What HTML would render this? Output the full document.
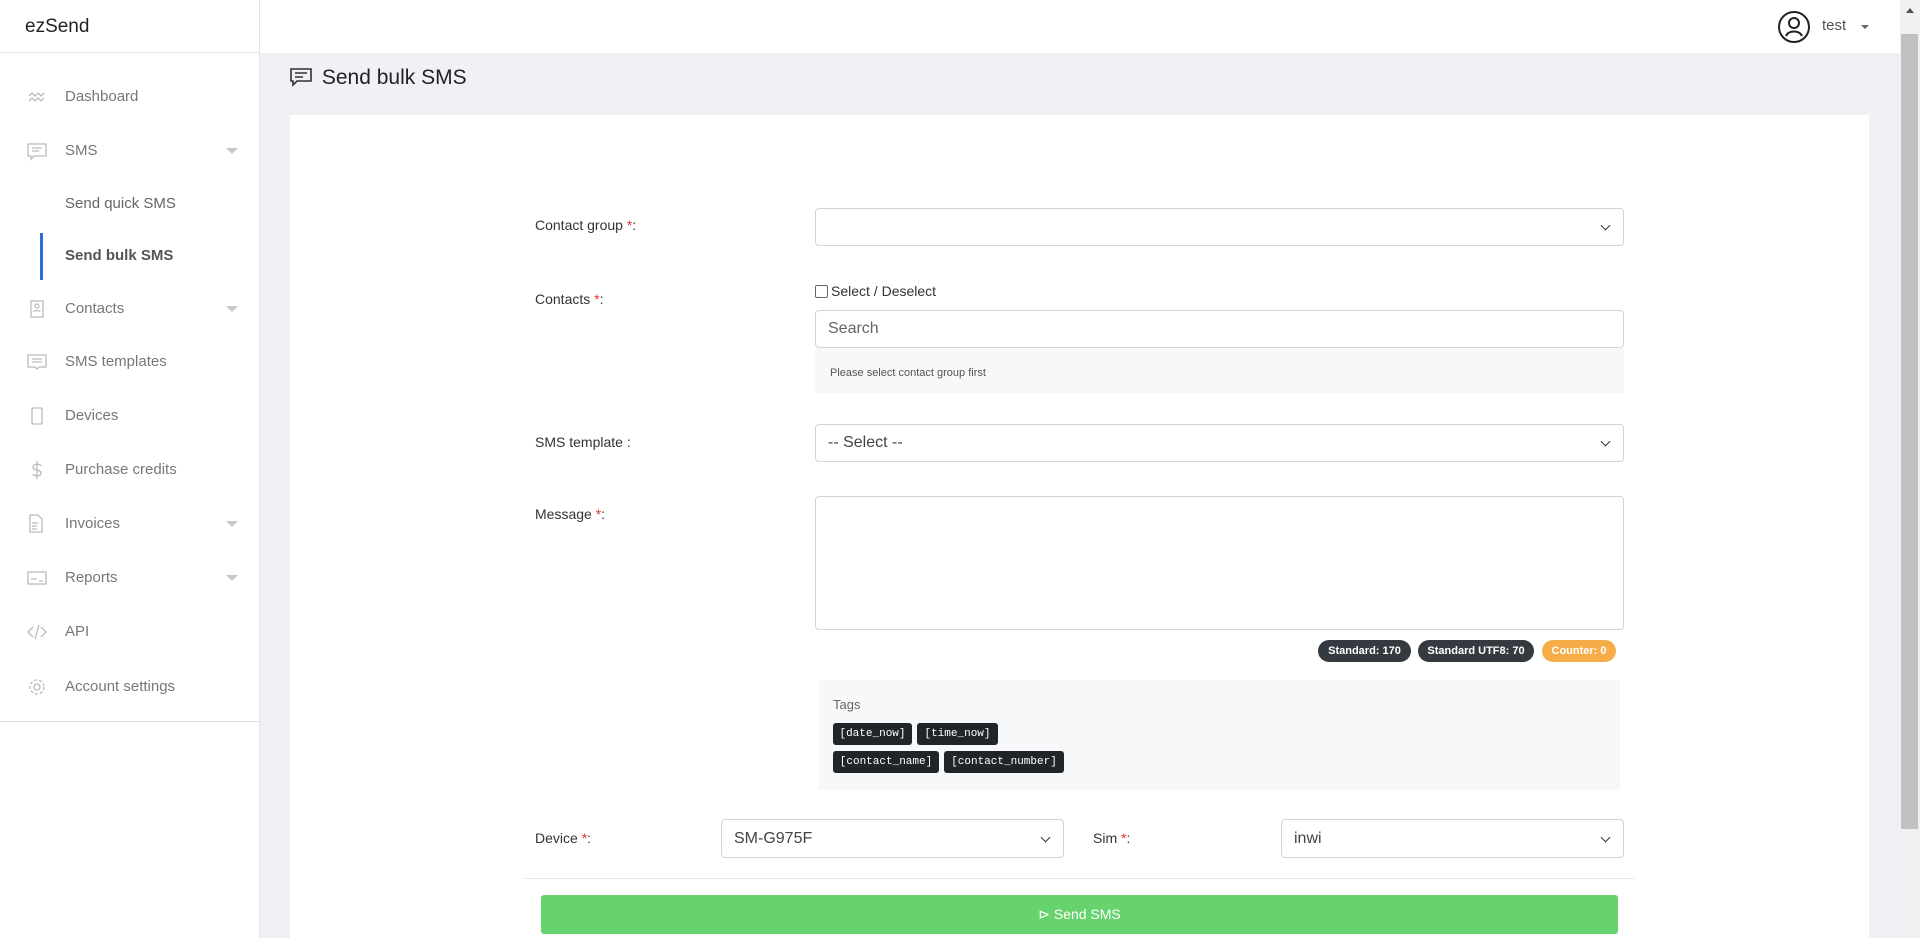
<!DOCTYPE html>
<html><head><meta charset="utf-8">
<style>
*{box-sizing:border-box;margin:0;padding:0}
body{width:1920px;height:938px;overflow:hidden;font-family:"Liberation Sans",sans-serif;background:#f0f1f5;color:#333;position:relative}
.sb{position:absolute;left:0;top:0;width:260px;height:938px;background:#fff;border-right:1px solid #e6e6e6}
.logo{height:53px;border-bottom:1px solid #e6e6e6;font-size:19px;padding:16px 0 0 25px;color:#222}
.it{position:absolute;left:0;width:259px;font-size:15px;color:#777}
.it .ic{position:absolute;left:27px;top:-10px;width:20px;height:20px}
.it .t{position:absolute;left:65px;top:-9px}
.it .ar{position:absolute;left:226px;top:-3px;width:0;height:0;border-left:6px solid transparent;border-right:6px solid transparent;border-top:6px solid #c8c8c8}
.sub{color:#666}
.top{position:absolute;left:260px;top:0;width:1640px;height:53px;background:#fff}
.scroll{position:absolute;left:1900px;top:0;width:20px;height:938px;background:#f1f1f1}
.thumb{position:absolute;left:1901px;top:34px;width:17px;height:795px;background:#c1c1c1}
.title{position:absolute;left:290px;top:66px;font-size:21px;color:#222}
.card{position:absolute;left:290px;top:115px;width:1579px;height:823px;background:#fff}
.lb{position:absolute;font-size:14px;color:#333}
.lb b{color:#e3342f;font-weight:normal}
.in{position:absolute;background:#fff;border:1px solid #ced4da;border-radius:4px;font-size:16px;color:#555;padding:0 12px;display:flex;align-items:center}
.chev{position:absolute;right:14px;top:50%;margin-top:-5px;width:7px;height:7px;border-right:1.6px solid #333;border-bottom:1.6px solid #333;transform:rotate(45deg)}
.badge{position:absolute;top:640px;height:22px;border-radius:11px;background:#343a40;color:#fff;font-size:11px;font-weight:bold;display:flex;align-items:center;justify-content:center}
.tag{position:absolute;height:22px;background:#212529;color:#fff;font-family:"Liberation Mono",monospace;font-size:11px;border-radius:3px;display:flex;align-items:center;justify-content:center}
</style></head><body>
<div class="sb">
<div class="logo">ezSend</div>
<div class="it" style="top:97px"><svg class="ic" viewBox="0 0 20 20" fill="none" stroke="#bbb" stroke-width="1.3"><path d="M2 9l3-3 3 3 3-3 3 3 3-3M2 14l3-3 3 3 3-3 3 3 3-3"/></svg><span class="t">Dashboard</span></div>
<div class="it" style="top:151px"><svg class="ic" viewBox="0 0 20 20" fill="none" stroke="#bbb" stroke-width="1.3"><path d="M1 3h18v12H7l-3 3v-3H1z M5 7h10M5 10h7"/></svg><span class="t">SMS</span><span class="ar"></span></div>
<div class="it sub" style="top:204px"><span class="t">Send quick SMS</span></div>
<div style="position:absolute;left:40px;top:233px;width:3px;height:47px;background:#2a6fd6"></div>
<div class="it sub" style="top:256px;font-weight:bold;color:#555"><span class="t">Send bulk SMS</span></div>
<div class="it" style="top:309px"><svg class="ic" viewBox="0 0 20 20" fill="none" stroke="#bbb" stroke-width="1.3"><path d="M4 2h12v16H4z M8 7a2 2 0 104 0 2 2 0 10-4 0M7 13c0-2 6-2 6 0"/></svg><span class="t">Contacts</span><span class="ar"></span></div>
<div class="it" style="top:362px"><svg class="ic" viewBox="0 0 20 20" fill="none" stroke="#bbb" stroke-width="1.3"><path d="M1 3h18v12h-7l-2 2-2-2H1z M5 7h10M5 10h10"/></svg><span class="t">SMS templates</span></div>
<div class="it" style="top:416px"><svg class="ic" viewBox="0 0 20 20" fill="none" stroke="#bbb" stroke-width="1.3"><rect x="5" y="2" width="10" height="16" rx="1"/></svg><span class="t">Devices</span></div>
<div class="it" style="top:470px"><svg class="ic" viewBox="0 0 20 20" fill="none" stroke="#bbb" stroke-width="1.3"><path d="M14 6c0-2-8-3-8 1s8 2 8 6-8 3-8 1M10 1v18"/></svg><span class="t">Purchase credits</span></div>
<div class="it" style="top:524px"><svg class="ic" viewBox="0 0 20 20" fill="none" stroke="#bbb" stroke-width="1.3"><path d="M3 1h8l4 4v13H3z M5 9h6M5 12h5M5 15h5"/></svg><span class="t">Invoices</span><span class="ar"></span></div>
<div class="it" style="top:578px"><svg class="ic" viewBox="0 0 20 20" fill="none" stroke="#bbb" stroke-width="1.3"><rect x="1" y="4" width="18" height="12"/><path d="M4 11h6M12 13h4"/></svg><span class="t">Reports</span><span class="ar"></span></div>
<div class="it" style="top:632px"><svg class="ic" viewBox="0 0 20 20" fill="none" stroke="#bbb" stroke-width="1.3"><path d="M6 5l-5 5 5 5M14 5l5 5-5 5M12 3l-4 14"/></svg><span class="t">API</span></div>
<div class="it" style="top:687px"><svg class="ic" viewBox="0 0 20 20" fill="none" stroke="#bbb" stroke-width="1.3"><circle cx="10" cy="10" r="3"/><circle cx="10" cy="10" r="7" stroke-dasharray="3 2"/></svg><span class="t">Account settings</span></div>
<div style="position:absolute;left:0;top:721px;width:259px;border-top:1px solid #e0e0e0"></div>
</div>
<div class="top">
<svg style="position:absolute;left:1517px;top:10px" width="34" height="34" viewBox="0 0 34 34" fill="none" stroke="#222" stroke-width="2"><circle cx="17" cy="17" r="15"/><circle cx="17" cy="13" r="5"/><path d="M9 26c2-6 14-6 16 0"/></svg>
<span style="position:absolute;left:1562px;top:17px;font-size:15px;color:#555">test</span>
<span style="position:absolute;left:1601px;top:25px;border-left:4px solid transparent;border-right:4px solid transparent;border-top:4px solid #666"></span>
</div>
<div class="scroll"></div><div class="thumb"></div>
<span style="position:absolute;left:1906px;top:8px;border-left:4px solid transparent;border-right:4px solid transparent;border-bottom:5px solid #505050"></span>
<div class="title"><svg style="vertical-align:-3px;margin-right:4px" width="22" height="20" viewBox="0 0 22 20" fill="none" stroke="#333" stroke-width="1.6"><path d="M1 2h20v12H7l-4 4v-4H1z M5 6h12M5 10h8"/></svg> Send bulk SMS</div>
<div class="card"></div>

<div class="lb" style="left:535px;top:217px">Contact group <b>*</b>:</div>
<div class="in" style="left:815px;top:208px;width:809px;height:38px"><span class="chev"></span></div>

<div class="lb" style="left:535px;top:291px">Contacts <b>*</b>:</div>
<div style="position:absolute;left:815px;top:283px;font-size:14px;color:#333"><span style="display:inline-block;width:13px;height:13px;border:1px solid #666;border-radius:2px;vertical-align:-2px;margin-right:3px"></span>Select / Deselect</div>
<div class="in" style="left:815px;top:310px;width:809px;height:38px;color:#666">Search</div>
<div style="position:absolute;left:815px;top:348px;width:809px;height:45px;background:#f6f8fa;font-size:11px;color:#555;padding:19px 0 0 15px">Please select contact group first</div>

<div class="lb" style="left:535px;top:434px">SMS template :</div>
<div class="in" style="left:815px;top:424px;width:809px;height:38px;color:#444">-- Select --<span class="chev"></span></div>

<div class="lb" style="left:535px;top:506px">Message <b>*</b>:</div>
<div class="in" style="left:815px;top:496px;width:809px;height:134px"></div>

<div class="badge" style="left:1318px;width:93px">Standard: 170</div>
<div class="badge" style="left:1418px;width:116px">Standard UTF8: 70</div>
<div class="badge" style="left:1542px;width:74px;background:#f6ad49">Counter: 0</div>

<div style="position:absolute;left:819px;top:680px;width:801px;height:110px;background:#f6f8fa"></div>
<div style="position:absolute;left:833px;top:697px;font-size:13px;color:#666">Tags</div>
<div class="tag" style="left:833px;top:723px;width:79px">[date_now]</div>
<div class="tag" style="left:917px;top:723px;width:81px">[time_now]</div>
<div class="tag" style="left:833px;top:751px;width:106px">[contact_name]</div>
<div class="tag" style="left:944px;top:751px;width:120px">[contact_number]</div>

<div class="lb" style="left:535px;top:830px">Device <b>*</b>:</div>
<div class="in" style="left:721px;top:819px;width:343px;height:39px;color:#444">SM-G975F<span class="chev"></span></div>
<div class="lb" style="left:1093px;top:830px">Sim <b>*</b>:</div>
<div class="in" style="left:1281px;top:819px;width:343px;height:39px;color:#444">inwi<span class="chev"></span></div>

<div style="position:absolute;left:524px;top:878px;width:1111px;border-top:1px solid #e6e6e6"></div>
<div style="position:absolute;left:541px;top:895px;width:1077px;height:39px;background:#67d36d;border-radius:3px;color:#fff;font-size:14px;display:flex;align-items:center;justify-content:center">&#x22B3; Send SMS</div>
</body></html>
